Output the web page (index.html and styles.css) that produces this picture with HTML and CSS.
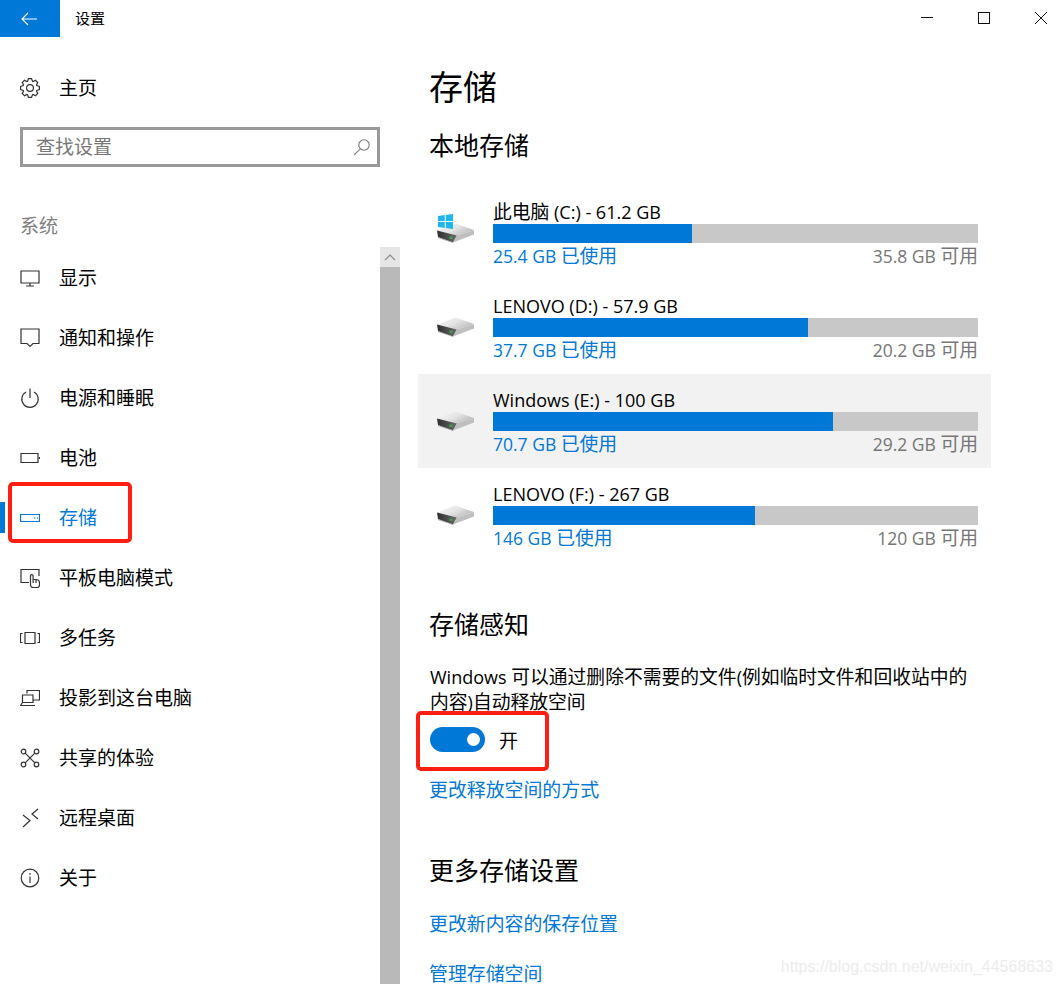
FILE: index.html
```html
<!DOCTYPE html>
<html lang="zh-CN">
<head>
    <meta charset="UTF-8">
    <meta name="viewport" content="width=device-width, initial-scale=1.0">
    <title>设置</title>
    <link rel="stylesheet" href="styles.css">
</head>
<body>

    <svg class="defs">
        <defs>
            <linearGradient id="drive-top" x1="0" y1="0" x2="1" y2="0.6">
                <stop offset="0" stop-color="#fafafa"/>
                <stop offset="0.55" stop-color="#e4e4e4"/>
                <stop offset="1" stop-color="#bcbcbc"/>
            </linearGradient>
            <linearGradient id="drive-front" x1="0" y1="0" x2="1" y2="0">
                <stop offset="0" stop-color="#2e2e2e"/>
                <stop offset="1" stop-color="#6b6b6b"/>
            </linearGradient>
        </defs>
        <symbol id="drive" viewBox="0 0 37 20">
            <path d="M0 7.5 L18.5 0.5 L37 7 L20 12.5 Z" fill="url(#drive-top)"/>
            <path d="M0 7.5 L20 12.5 L16 19.5 L1 14 Z" fill="url(#drive-front)"/>
            <path d="M20 12.5 L37 7 L37 11.5 L16 19.5 Z" fill="#bfbfbf"/>
            <path d="M1 14 L16 19.5 L16.5 20 L1 15 Z" fill="#9a9a9a"/>
            <rect x="12.5" y="13.5" width="3" height="2.5" fill="#3f9f4f"/>
        </symbol>
    </svg>

    <header class="titlebar">
        <button class="back-btn" aria-label="返回">
            <svg width="16" height="14" viewBox="0 0 16 14"><path d="M7 1 L1 7 L7 13 M1 7 H16" fill="none" stroke="#fff" stroke-width="1.1"/></svg>
        </button>
        <span class="app-name">设置</span>
        <div class="win-controls">
            <svg width="12" height="12" viewBox="0 0 12 12"><path d="M0 5.5 H12" stroke="#111" fill="none"/></svg>
            <svg width="12" height="12" viewBox="0 0 12 12"><rect x="0.5" y="0.5" width="11" height="11" stroke="#111" fill="none"/></svg>
            <svg width="12" height="12" viewBox="0 0 12 12"><path d="M0 0 L12 12 M12 0 L0 12" stroke="#111" fill="none"/></svg>
        </div>
    </header>

    <div class="layout">
        <aside class="sidebar">
            <a class="nav-item home-item" href="#">
                <svg class="nav-icon" viewBox="0 0 20 20"><g transform="translate(10 10)"><polygon points="-1.6,-9.4 1.6,-9.4 2.4,-6.8 3.11,-6.5 5.51,-7.78 7.78,-5.51 6.5,-3.11 6.8,-2.4 9.4,-1.6 9.4,1.6 6.8,2.4 6.5,3.11 7.78,5.51 5.51,7.78 3.11,6.5 2.4,6.8 1.6,9.4 -1.6,9.4 -2.4,6.8 -3.11,6.5 -5.51,7.78 -7.78,5.51 -6.5,3.11 -6.8,2.4 -9.4,1.6 -9.4,-1.6 -6.8,-2.4 -6.5,-3.11 -7.78,-5.51 -5.51,-7.78 -3.11,-6.5 -2.4,-6.8"/><circle r="3.4"/></g></svg>
                <span>主页</span>
            </a>
            <div class="search-box">
                <span class="search-text">查找设置</span>
                <svg width="18" height="18" viewBox="0 0 18 18"><circle cx="11" cy="7" r="5.2" fill="none" stroke="#777" stroke-width="1.1"/><path d="M7.2 10.8 L1 17" stroke="#888" stroke-width="1.1"/></svg>
            </div>
            <div class="section-label">系统</div>
            <div class="nav-area">
                <nav class="nav-list">
                    <a class="nav-item" href="#">
                        <svg class="nav-icon" viewBox="0 0 20 20"><path d="M1 3 H19 V15 H1 Z M10 15 V18 M6 18 H14"/></svg>
                        <span>显示</span>
                    </a>
                    <a class="nav-item" href="#">
                        <svg class="nav-icon" viewBox="0 0 20 20"><path d="M1 1 H19 V15.5 H13 L10 18.5 L7 15.5 H1 Z"/></svg>
                        <span>通知和操作</span>
                    </a>
                    <a class="nav-item" href="#">
                        <svg class="nav-icon" viewBox="0 0 20 20"><path d="M6 4 A8.2 8.2 0 1 0 14 4 M10 0.5 V10"/></svg>
                        <span>电源和睡眠</span>
                    </a>
                    <a class="nav-item" href="#">
                        <svg class="nav-icon" viewBox="0 0 20 20"><path d="M1 5.5 H18 V14.5 H1 Z M19.5 9 V11"/></svg>
                        <span>电池</span>
                    </a>
                    <a class="nav-item active" href="#">
                        <svg class="nav-icon" viewBox="0 0 20 20"><path d="M0.5 6.5 H19.5 V13.5 H0.5 Z M14 10 H15.5 M17 10 H18"/></svg>
                        <span>存储</span>
                    </a>
                    <a class="nav-item" href="#">
                        <svg class="nav-icon" viewBox="0 0 20 20"><path d="M9 14.5 H1 V1.5 H19 V8 M10.5 16 V8 A1.3 1.3 0 0 1 13.1 8 V11.5 H16 A3.5 3.5 0 0 1 19.5 15 V16.5 A3.2 3.2 0 0 1 16.3 19.7 H13.5 A3 3 0 0 1 10.5 17 Z M13.1 11.5 V15 M16 12 V15"/></svg>
                        <span>平板电脑模式</span>
                    </a>
                    <a class="nav-item" href="#">
                        <svg class="nav-icon" viewBox="0 0 20 20"><path d="M5 4.5 H15 V15.5 H5 Z M2.5 5.5 H0.5 V14.5 H2.5 M17.5 5.5 H19.5 V14.5 H17.5"/></svg>
                        <span>多任务</span>
                    </a>
                    <a class="nav-item" href="#">
                        <svg class="nav-icon" viewBox="0 0 20 20"><path d="M7 5.5 V2.5 H19.5 V12 H13 M2.5 7 H13 V14.5 H2.5 Z M2.5 14.5 L0.5 17.5 H15"/></svg>
                        <span>投影到这台电脑</span>
                    </a>
                    <a class="nav-item" href="#">
                        <svg class="nav-icon" viewBox="0 0 20 20"><circle cx="3.5" cy="3.5" r="2.3"/><circle cx="16.5" cy="3.5" r="2.3"/><circle cx="3.5" cy="16.5" r="2.3"/><circle cx="16.5" cy="16.5" r="2.3"/><path d="M5.2 5.2 L14.8 14.8 M14.8 5.2 L5.2 14.8"/></svg>
                        <span>共享的体验</span>
                    </a>
                    <a class="nav-item" href="#">
                        <svg class="nav-icon" viewBox="0 0 20 20"><path d="M3 7 L10 12.5 L3 19 M18 1 L12 6 L18 11"/></svg>
                        <span>远程桌面</span>
                    </a>
                    <a class="nav-item" href="#">
                        <svg class="nav-icon" viewBox="0 0 20 20"><circle cx="10" cy="10" r="8.8"/><path d="M10 8.5 V15 M10 5 V6.8"/></svg>
                        <span>关于</span>
                    </a>
                </nav>
                <div class="scrollbar">
                    <div class="scroll-up">
                        <svg width="12" height="7" viewBox="0 0 12 7"><path d="M1 6 L6 1 L11 6" fill="none" stroke="#8c8c8c" stroke-width="1.2"/></svg>
                    </div>
                </div>
            </div>
        </aside>

        <main class="content">
            <h1>存储</h1>
            <h2>本地存储</h2>
            <div class="drives">
                <div class="drive-row">
                    <div class="drive-icon">
                        <svg class="drive-svg"><use href="#drive"/></svg>
                        <svg class="win-logo" viewBox="0 0 15 15"><path d="M0 2 L6.8 1 V7.1 H0 Z M7.8 0.9 L15 0 V7.1 H7.8 Z M0 8 H6.8 V14 L0 13 Z M7.8 8 H15 V15 L7.8 14.1 Z" fill="#1fb6ee"/></svg>
                    </div>
                    <div class="drive-info">
                        <div class="drive-name"><span class="zh">此电脑</span> (C:) - 61.2 GB</div>
                        <div class="bar"><div class="bar-fill" style="width: 41%"></div></div>
                        <div class="drive-usage"><span class="used">25.4 GB <span class="zh">已使用</span></span><span class="free">35.8 GB <span class="zh">可用</span></span></div>
                    </div>
                </div>
                <div class="drive-row">
                    <div class="drive-icon"><svg class="drive-svg"><use href="#drive"/></svg></div>
                    <div class="drive-info">
                        <div class="drive-name">LENOVO (D:) - 57.9 GB</div>
                        <div class="bar"><div class="bar-fill" style="width: 65%"></div></div>
                        <div class="drive-usage"><span class="used">37.7 GB <span class="zh">已使用</span></span><span class="free">20.2 GB <span class="zh">可用</span></span></div>
                    </div>
                </div>
                <div class="drive-row hover">
                    <div class="drive-icon"><svg class="drive-svg"><use href="#drive"/></svg></div>
                    <div class="drive-info">
                        <div class="drive-name">Windows (E:) - 100 GB</div>
                        <div class="bar"><div class="bar-fill" style="width: 70.1%"></div></div>
                        <div class="drive-usage"><span class="used">70.7 GB <span class="zh">已使用</span></span><span class="free">29.2 GB <span class="zh">可用</span></span></div>
                    </div>
                </div>
                <div class="drive-row">
                    <div class="drive-icon"><svg class="drive-svg"><use href="#drive"/></svg></div>
                    <div class="drive-info">
                        <div class="drive-name">LENOVO (F:) - 267 GB</div>
                        <div class="bar"><div class="bar-fill" style="width: 54%"></div></div>
                        <div class="drive-usage"><span class="used">146 GB <span class="zh">已使用</span></span><span class="free">120 GB <span class="zh">可用</span></span></div>
                    </div>
                </div>
            </div>

            <h2 class="sense-title">存储感知</h2>
            <p class="sense-text">Windows <span class="zh">可以通过删除不需要的文件</span>(<span class="zh">例如临时文件和回收站中的内容</span>)<span class="zh">自动释放空间</span></p>
            <div class="toggle-row">
                <div class="toggle"><div class="knob"></div></div>
                <span>开</span>
            </div>
            <a class="link change-link" href="#">更改释放空间的方式</a>

            <h2 class="more-title">更多存储设置</h2>
            <a class="link save-link" href="#">更改新内容的保存位置</a>
            <a class="link manage-link" href="#">管理存储空间</a>
        </main>
    </div>

    <!-- red annotation boxes drawn over the screenshot -->
    <div class="mark mark-storage"></div>
    <div class="mark mark-toggle"></div>
    <div class="watermark">https://blog.csdn.net/weixin_44568633</div>

</body>
</html>
```

FILE: styles.css
```css
* {
    box-sizing: border-box;
}
html, body {
    height: 100%;
}
body {
    margin: 0;
    position: relative;
    overflow: hidden;
    background-color: #fff;
    color: #000;
    font-family: "Open Sans", "Noto Sans CJK SC", sans-serif;
    font-size: 19px;
}
a {
    color: inherit;
    text-decoration: none;
}
/* kept rendered at zero size, gradients stop working under display: none */
.defs {
    position: absolute;
    width: 0;
    height: 0;
}
.zh {
    font-size: 18.8px;
}

/* title bar */
.titlebar {
    display: flex;
    align-items: center;
    height: 37px;
}
.back-btn {
    display: flex;
    align-items: center;
    justify-content: center;
    width: 60px;
    height: 37px;
    padding: 0 3px 0 0;
    border: none;
    background-color: #0078d7;
}
.app-name {
    margin: -3px 0 0 15px;
    font-size: 15px;
}
.win-controls {
    display: flex;
    gap: 45px;
    margin-left: auto;
    margin-right: 15px;
    padding-bottom: 2px;
}

.layout {
    display: flex;
    height: 947px;
}

/* left side */
.sidebar {
    width: 400px;
    flex-shrink: 0;
    display: flex;
    flex-direction: column;
}
.nav-item {
    display: flex;
    align-items: center;
    height: 60px;
    padding-left: 20px;
    gap: 19px;
    flex-shrink: 0;
    color: #000;
}
.nav-item span {
    margin-top: -2px;
}
.nav-icon {
    width: 20px;
    height: 20px;
    fill: none;
    stroke: #333;
    stroke-width: 1.2;
}
.home-item {
    margin-top: 21px;
}
.search-box {
    display: flex;
    align-items: center;
    justify-content: space-between;
    width: 360px;
    height: 40px;
    margin: 9px 0 0 20px;
    padding: 0 6px 0 13px;
    border: 3px solid #999;
    color: #777;
}
.search-text {
    margin-top: -2px;
}
.section-label {
    height: 42px;
    line-height: 42px;
    margin: 38px 0 0 20px;
    color: #808080;
}
.nav-area {
    display: flex;
    flex: 1;
    min-height: 0;
}
.nav-list {
    flex: 1;
    padding-top: 1px;
}
.nav-item.active {
    color: #0078d7;
    position: relative;
}
.nav-item.active .nav-icon {
    stroke: #0078d7;
}
.nav-item.active::before {
    content: "";
    position: absolute;
    left: 0;
    top: 14px;
    width: 5px;
    height: 31px;
    background-color: #0078d7;
}
.scrollbar {
    width: 20px;
    background-color: #b9b9b9;
}
.scroll-up {
    display: flex;
    align-items: center;
    justify-content: center;
    height: 20px;
    background-color: #e6e6e6;
}

/* right side */
.content {
    flex: 1;
    padding: 0 71px 0 29px;
}
h1 {
    margin: 20px 0 0;
    height: 60px;
    line-height: 60px;
    font-size: 34px;
    font-weight: normal;
}
h2 {
    margin: 9px 0 0;
    height: 40px;
    line-height: 38px;
    font-size: 25px;
    font-weight: normal;
}
.drives {
    margin: 20px 0 0 -11px;
}
.drive-row {
    display: flex;
    height: 94px;
    padding: 14px 13px 0 19px;
}
.drive-row.hover {
    background-color: #f2f2f2;
}
.drive-icon {
    position: relative;
    width: 37px;
    height: 20px;
    margin: 23px 19px 0 0;
    flex-shrink: 0;
}
.drive-svg {
    width: 37px;
    height: 20px;
    display: block;
}
.win-logo {
    position: absolute;
    left: 1px;
    top: -9px;
    width: 15px;
    height: 15px;
}
.drive-info {
    flex: 1;
}
.drive-name {
    height: 24px;
    line-height: 24px;
    font-size: 18px;
    color: #000;
}
.bar {
    height: 19px;
    background-color: #c8c8c8;
}
.bar-fill {
    height: 100%;
    background-color: #0078d7;
}
.drive-usage {
    display: flex;
    justify-content: space-between;
    height: 26px;
    line-height: 26px;
    font-size: 17.5px;
}
.used {
    color: #0078d7;
}
.free {
    color: #767676;
}
.sense-title {
    margin-top: 43px;
}
.sense-text {
    margin: 20px 0 0 1px;
    width: 545px;
    line-height: 25px;
    font-size: 18px;
    color: #000;
}
.toggle-row {
    display: flex;
    align-items: center;
    gap: 14px;
    height: 25px;
    margin: 12px 0 0 1px;
}
.toggle {
    display: flex;
    align-items: center;
    justify-content: flex-end;
    width: 55px;
    height: 25px;
    padding-right: 5px;
    border-radius: 13px;
    background-color: #0078d7;
}
.knob {
    width: 13px;
    height: 13px;
    border-radius: 50%;
    background-color: #fff;
}
.link {
    display: block;
    height: 26px;
    line-height: 26px;
    font-size: 18.9px;
    color: #0078d7;
}
.change-link {
    margin-top: 25px;
}
.more-title {
    margin-top: 48px;
}
.save-link {
    margin-top: 20px;
}
.manage-link {
    margin-top: 24px;
}

/* annotations on top of the screenshot */
.mark {
    position: absolute;
    border: 4px solid #ff1f12;
    border-radius: 5px;
}
.mark-storage {
    left: 8px;
    top: 482px;
    width: 124px;
    height: 61px;
}
.mark-toggle {
    left: 416px;
    top: 711px;
    width: 133px;
    height: 60px;
}
.watermark {
    position: absolute;
    right: 9px;
    bottom: 8px;
    font-family: "Liberation Sans", sans-serif;
    font-size: 16px;
    color: #ececec;
}
```
